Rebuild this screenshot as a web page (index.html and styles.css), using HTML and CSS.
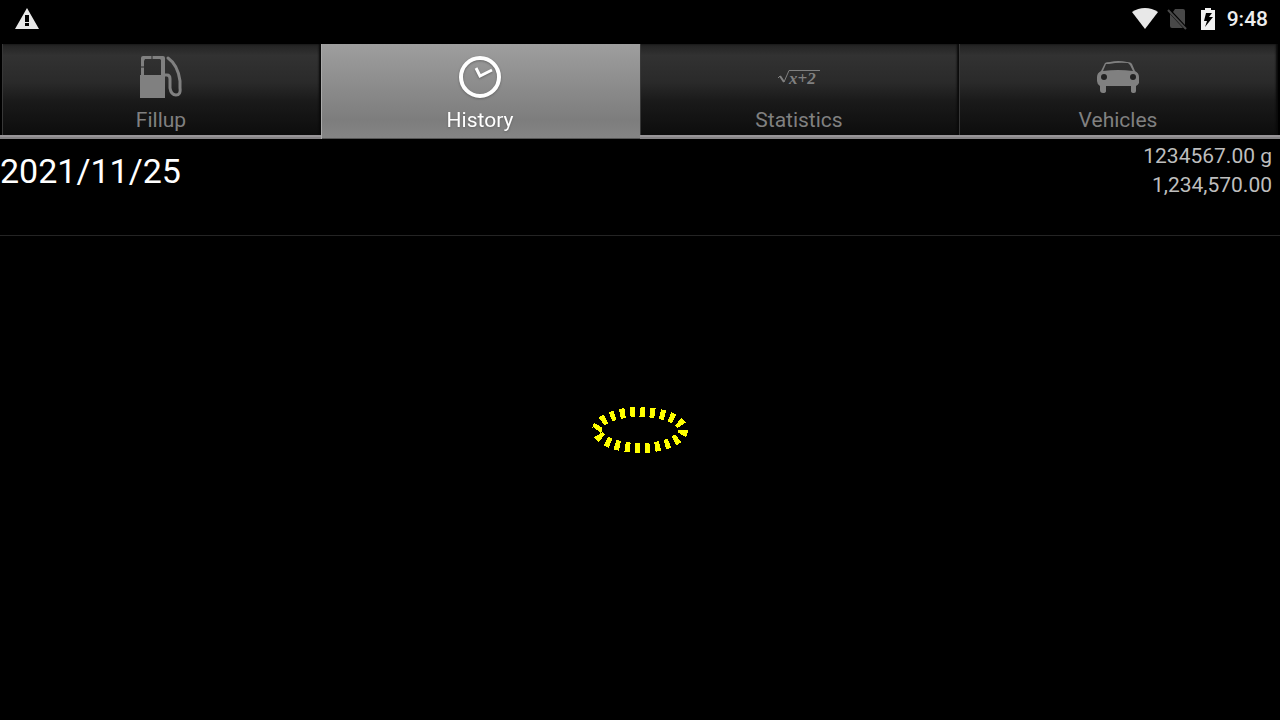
FILE: index.html
```html
<!DOCTYPE html>
<html lang="en">
<head>
<meta charset="utf-8">
<meta name="viewport" content="width=device-width, initial-scale=1">
<title>History</title>
<link rel="stylesheet" href="styles.css">
</head>
<body>
<header class="status-bar">
  <svg class="status-icon" width="24" height="22" viewBox="0 0 24 22" role="img" aria-label="Warning"><path fill="#e8e8e8" fill-rule="evenodd" d="M12 0 L24 21 H0 Z M10 7 V14 H14 V7 Z M10 15 V18 H14 V15 Z"/></svg>
  <div class="status-right">
    <svg class="wifi" width="26" height="22" viewBox="0 0 26 22" role="img" aria-label="Wi-Fi"><path fill="#e8e8e8" d="M0 4 Q6 0 13 0 T26 4 L13 21 Z"/></svg>
    <svg class="sim" width="20" height="22" viewBox="0 0 20 22" role="img" aria-label="No SIM"><path fill="#484848" d="M8 1 H16 Q18 1 18 3 V17 L6 4 Z M3 6 L16 20 H5 Q3 20 3 18 Z"/><path stroke="#484848" stroke-width="2" d="M1 2 L19 21"/></svg>
    <svg class="battery" width="14" height="22" viewBox="0 0 14 22" role="img" aria-label="Charging"><path fill="#f2f2f2" fill-rule="evenodd" d="M4 0 H10 V2 H14 V22 H0 V2 H4 Z M5 5 L3 13 H6 L4 19 L12 9 H8 L11 5 Z"/></svg>
    <time class="clock">9:48</time>
  </div>
</header>
<nav class="tabs" role="tablist">
  <button class="tab" role="tab" aria-selected="false">
    <svg class="tab-icon" viewBox="0 0 42 42" aria-hidden="true"><path fill="currentColor" fill-rule="evenodd" d="M1 2 Q1 0 3 0 H23 Q25 0 25 2 V42 H0 V19 H1 Z M5 3 L4 5 V19 H21 V4 L20 3 Z"/><path fill="none" stroke="currentColor" stroke-width="3" stroke-linecap="round" d="M25 19 H27 Q30 19 30 23 V32 Q31 39 36 39 Q41 39 40 32 V25 Q38 9 28 2"/><path stroke="#292929" d="M12 0 V3 M1 11 H4"/></svg>
    <span class="tab-label">Fillup</span>
  </button>
  <button class="tab tab-selected" role="tab" aria-selected="true">
    <svg class="tab-icon" viewBox="0 0 42 42" aria-hidden="true"><circle cx="21" cy="21" r="19" fill="none" stroke="currentColor" stroke-width="4"/><path fill="none" stroke="currentColor" stroke-width="3" d="M17 12 L21 20 L33 14"/></svg>
    <span class="tab-label">History</span>
  </button>
  <button class="tab" role="tab" aria-selected="false">
    <svg class="tab-icon" viewBox="0 0 42 42" aria-hidden="true"><path fill="none" stroke="currentColor" d="M0 22 L2 20 L6 26 L11 14.5 H42"/><path stroke="currentColor" stroke-width="2" d="M2 20 L6 26"/><text class="formula" x="11" y="28">x+2</text></svg>
    <span class="tab-label">Statistics</span>
  </button>
  <button class="tab" role="tab" aria-selected="false">
    <svg class="tab-icon" viewBox="0 0 42 42" aria-hidden="true"><path fill="currentColor" fill-rule="evenodd" d="M4 15 L8 7 Q9 6 13 6 Q21 4 30 6 Q34 6 35 8 L38 15 Q42 17 42 21 V27 Q41 29 39 30 V35 Q39 37 37 37 Q34 37 34 35 V30 H9 V35 Q9 37 6 37 Q3 37 3 34 V30 Q0 28 0 25 V21 Q0 17 4 15 Z M6 15 Q21 13 36 15 L33 9 L31 7 Q21 6 12 8 L9 8 Z"/><g fill="#222"><circle cx="7" cy="21" r="3"/><circle cx="36" cy="21" r="3"/></g></svg>
    <span class="tab-label">Vehicles</span>
  </button>
</nav>
<main>
  <ul class="history">
    <li class="entry">
      <time class="date">2021/11/25</time>
      <div class="values"><span>1234567.00 g</span><span>1,234,570.00</span></div>
    </li>
  </ul>
</main>
<svg class="touch-mark" width="96" height="46" viewBox="0 0 96 46" aria-hidden="true"><ellipse cx="48" cy="23" rx="43" ry="18" fill="none" stroke="#ff0" stroke-width="10" pathLength="200" stroke-dasharray="5 5" shape-rendering="crispEdges"/></svg>
</body>
</html>
```
FILE: styles.css
```css
* { box-sizing: border-box; }
body {
  margin: 0;
  min-height: 100vh;
  background: #000;
  color: #fff;
  font-family: Roboto, "Liberation Sans", sans-serif;
}
.status-bar {
  display: flex;
  align-items: center;
  justify-content: space-between;
  height: 44px;
  padding: 0 12px 6px 15px;
}
.status-right { display: flex; align-items: center; }
.sim { margin-left: 9px; }
.battery { margin-left: 14px; }
.clock {
  margin-left: 12px;
  color: #eee;
  font-size: 21px;
  font-weight: 500;
  line-height: 24px;
}
.tabs {
  display: grid;
  grid-template-columns: repeat(4, 1fr);
  padding: 0 2px;
  overflow: hidden;
}
.tab {
  display: flex;
  flex-direction: column;
  align-items: center;
  gap: 8px;
  padding: 12px 2px 5px 0;
  border: 0;
  border-left: 1px solid #383838;
  background: linear-gradient(#222, #323232 12%, #2a2a2a 40%, #1a1a1a 60%, #0b0b0b);
  box-shadow: inset -2px 0 2px #0a0a0a;
  color: #808080;
  font: inherit;
  position: relative;
}
.tab::after {
  content: "";
  position: absolute;
  inset: auto -3px 0 -3px;
  height: 4px;
  background: linear-gradient(#989598 50%, #858385 50%);
}
.tab-selected {
  z-index: 1;
  border-left-color: #aaa;
  background: linear-gradient(#9e9e9e, #7d7d7d 80%, #858585);
  box-shadow: none;
  color: #fff;
}
.tab-selected::after {
  inset: auto 0 0 0;
  height: 1px;
  background: #555;
}
.tab-icon { width: 42px; height: 42px; }
.tab-label { font-size: 21px; line-height: 28px; }
.tab-selected .tab-icon, .tab-selected .tab-label { filter: drop-shadow(0 1px 1px #666); }
.formula { fill: currentColor; font: italic bold 17px "Liberation Serif", serif; }
.history { margin: 0; padding: 0; list-style: none; }
.entry {
  display: flex;
  justify-content: space-between;
  min-height: 97px;
  padding: 3px 8px 0 0;
  border-bottom: 1px solid #242424;
}
.date { padding-top: 9px; font-size: 34px; line-height: 40px; }
.values {
  display: flex;
  flex-direction: column;
  align-items: flex-end;
  color: #bebebe;
  font-size: 21px;
  line-height: 29px;
}
.touch-mark { position: fixed; left: calc(50% - 48px); top: 407px; }
```
